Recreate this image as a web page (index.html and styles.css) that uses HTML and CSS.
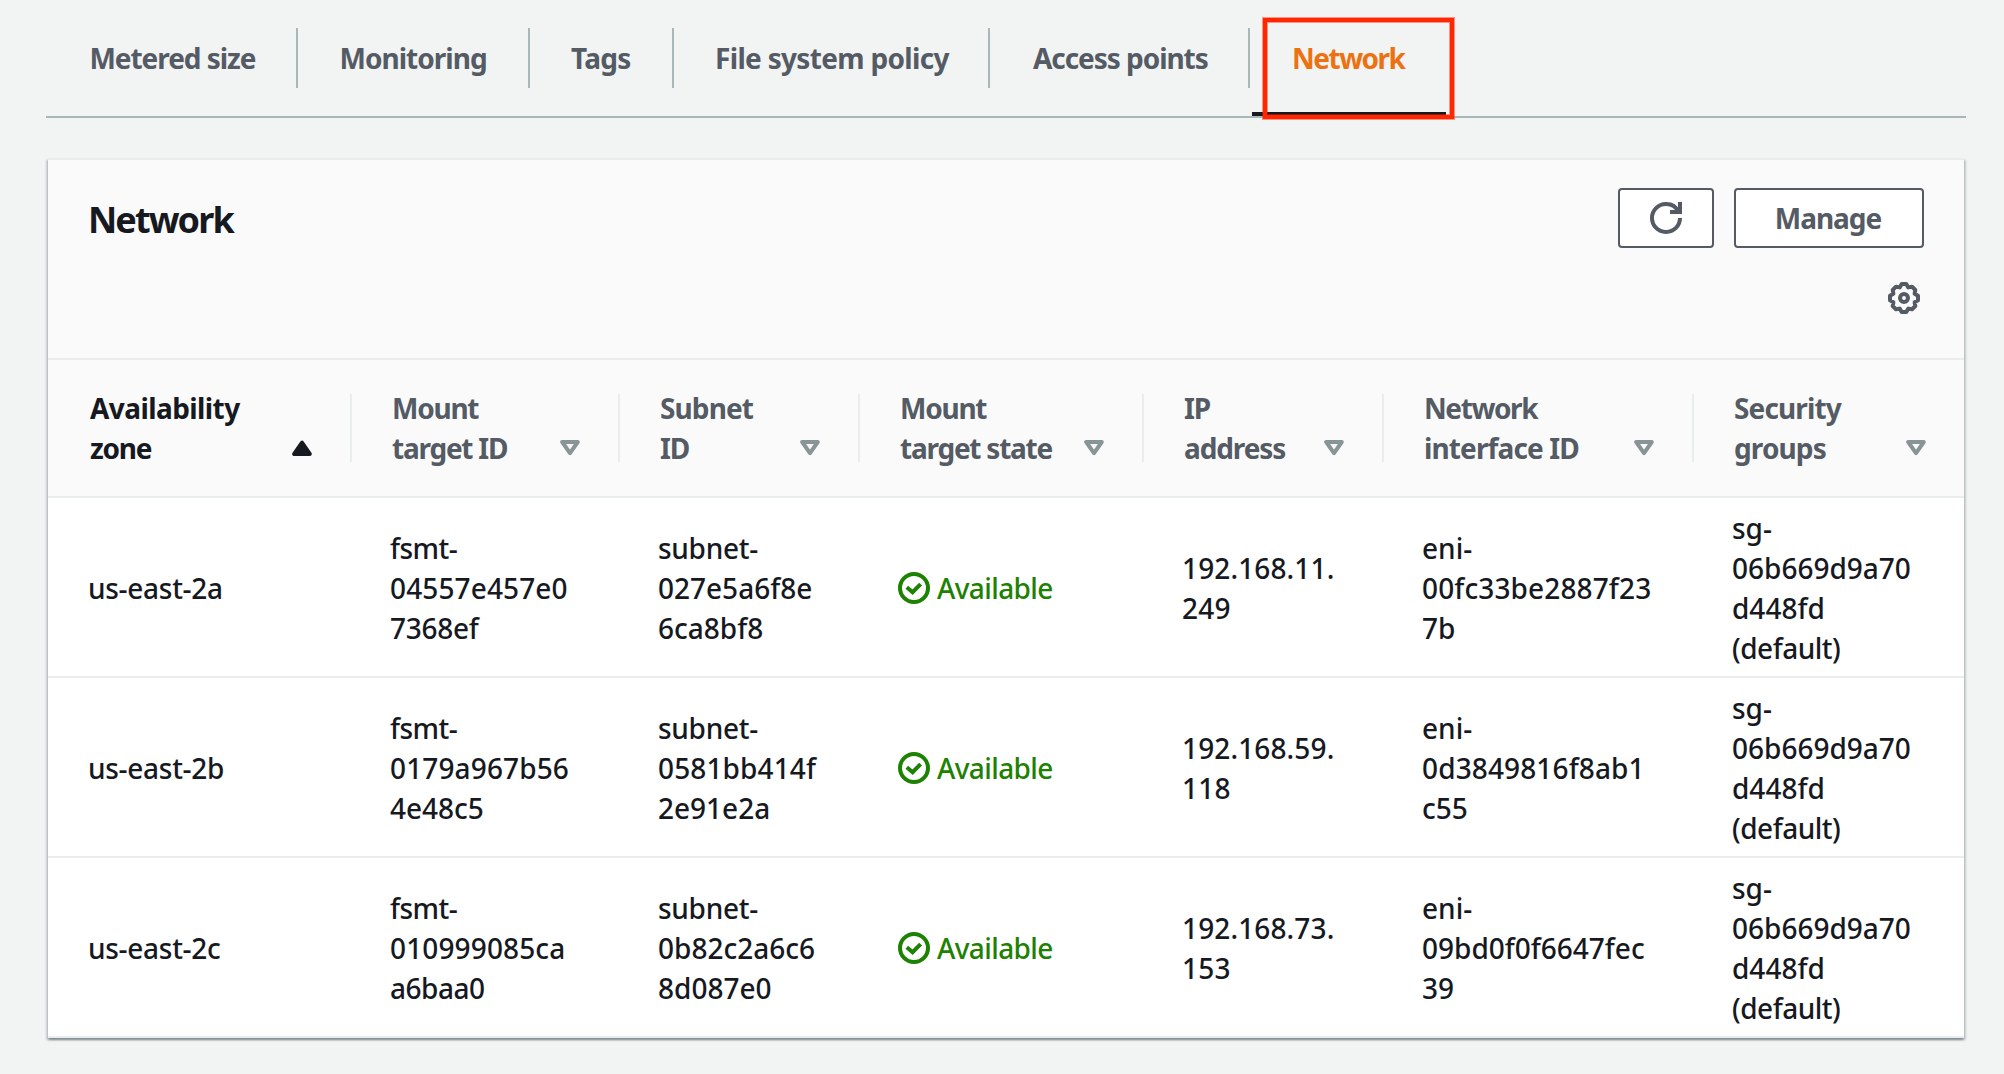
FILE: index.html
```html
<!DOCTYPE html>
<html lang="en">
<head>
<meta charset="utf-8">
<title>Network</title>
<link rel="stylesheet" href="styles.css">
</head>
<body>
<svg class="defs" aria-hidden="true">
  <symbol id="sort" viewBox="0 0 20 16"><path d="M2.2 2H17.8L10 13.2Z" fill="none" stroke="#879596" stroke-width="4" stroke-linejoin="round"/></symbol>
  <symbol id="sorted" viewBox="0 0 20 16"><path d="M2.2 14H17.8L10 2.6Z" fill="#16191f" stroke="#16191f" stroke-width="4" stroke-linejoin="round"/></symbol>
  <symbol id="ok" viewBox="0 0 32 32"><g fill="none" stroke="#1d8102" stroke-width="4"><circle cx="16" cy="16" r="14"/><path d="M8.8 15.2L14.6 20.2L22.6 12.2"/></g></symbol>
</svg>
<nav class="tabs">
  <a class="tab metered">Metered size</a>
  <a class="tab monitoring">Monitoring</a>
  <a class="tab tags">Tags</a>
  <a class="tab policy">File system policy</a>
  <a class="tab access">Access points</a>
  <a class="tab network active">Network</a>
  <span class="highlight"></span>
</nav>
<section class="card">
  <header class="card-head">
    <div class="title-row">
      <h2>Network</h2>
      <button class="btn refresh" aria-label="Refresh"><svg width="32" height="32" viewBox="0 0 16 16" fill="none" stroke="#545b64" stroke-width="2"><path d="M10 5h5V0"/><path d="M15 8a6.957 6.957 0 0 1-7 7 6.957 6.957 0 0 1-7-7 6.957 6.957 0 0 1 7-7 6.87 6.87 0 0 1 6.3 4"/></svg></button>
      <button class="btn manage">Manage</button>
    </div>
    <div class="prefs"><svg width="32" height="32" viewBox="-16 -16 32 32" fill="none" stroke="#545b64" stroke-width="4"><path stroke-linejoin="round" d="M-2.3-14H2.3L4.3-10.6L8-11.3L11.3-8L10.6-4.3L14-2.3V2.3L10.6 4.3L11.3 8L8 11.3L4.3 10.6L2.3 14H-2.3L-4.3 10.6L-8 11.3L-11.3 8L-10.6 4.3L-14 2.3V-2.3L-10.6-4.3L-11.3-8L-8-11.3L-4.3-10.6Z"/><circle r="4"/></svg></div>
  </header>
  <table>
    <colgroup><col class="c1"><col class="c2"><col class="c3"><col class="c4"><col class="c5"><col class="c6"><col class="c7"></colgroup>
    <thead>
      <tr>
        <th class="sorted"><div><span><b class="n2">Availability</b><b class="n5">zone</b></span><svg><use href="#sorted"/></svg></div></th>
        <th><div><span><b class="n5">Mount</b><b class="n5">target ID</b></span><svg><use href="#sort"/></svg></div></th>
        <th><div><span><b class="n3">Subnet</b><b class="n5">ID</b></span><svg><use href="#sort"/></svg></div></th>
        <th><div><span><b class="n5">Mount</b><b class="n5">target state</b></span><svg><use href="#sort"/></svg></div></th>
        <th><div><span><b class="n4">IP</b><b class="n4">address</b></span><svg><use href="#sort"/></svg></div></th>
        <th><div><span><b class="n6">Network</b><b class="n3">interface ID</b></span><svg><use href="#sort"/></svg></div></th>
        <th><div><span><b class="n3">Security</b><b class="n3">groups</b></span><svg><use href="#sort"/></svg></div></th>
      </tr>
    </thead>
    <tbody>
      <tr>
        <td><i class="n1">us-east-2a</i></td>
        <td><i class="n2">fsmt-</i><i class="p1">04557e457e0</i><i class="n1">7368ef</i></td>
        <td><i class="n1">subnet-</i><i>027e5a6f8e</i><i>6ca8bf8</i></td>
        <td><div class="status"><svg><use href="#ok"/></svg><i>Available</i></div></td>
        <td><i class="p1">192.168.11.</i><i class="p2">249</i></td>
        <td><i>eni-</i><i class="p1">00fc33be2887f23</i><i>7b</i></td>
        <td><i>sg-</i><i>06b669d9a70</i><i>d448fd</i><i class="n2">(default)</i></td>
      </tr>
      <tr>
        <td><i class="n1">us-east-2b</i></td>
        <td><i class="n2">fsmt-</i><i class="p1">0179a967b56</i><i>4e48c5</i></td>
        <td><i class="n1">subnet-</i><i class="p1">0581bb414f</i><i>2e91e2a</i></td>
        <td><div class="status"><svg><use href="#ok"/></svg><i>Available</i></div></td>
        <td><i class="p1">192.168.59.</i><i class="p2">118</i></td>
        <td><i>eni-</i><i class="p1">0d3849816f8ab1</i><i>c55</i></td>
        <td><i>sg-</i><i>06b669d9a70</i><i>d448fd</i><i class="n2">(default)</i></td>
      </tr>
      <tr>
        <td><i class="n1">us-east-2c</i></td>
        <td><i class="n2">fsmt-</i><i class="p1">010999085ca</i><i class="n2">a6baa0</i></td>
        <td><i class="n1">subnet-</i><i>0b82c2a6c6</i><i>8d087e0</i></td>
        <td><div class="status"><svg><use href="#ok"/></svg><i>Available</i></div></td>
        <td><i class="p1">192.168.73.</i><i class="p2">153</i></td>
        <td><i>eni-</i><i>09bd0f0f6647fec</i><i>39</i></td>
        <td><i>sg-</i><i>06b669d9a70</i><i>d448fd</i><i class="n2">(default)</i></td>
      </tr>
    </tbody>
  </table>
</section>
</body>
</html>
```
FILE: styles.css
```css
* { box-sizing: border-box; }
body {
  margin: 0;
  padding: 0 40px 0 46px;
  height: 1074px;
  overflow: hidden;
  background: #f2f3f3;
  color: #16191f;
  font: 500 28px/40px "Noto Sans", "Open Sans", sans-serif;
}
.defs { position: absolute; width: 0; height: 0; }
svg { display: block; flex: none; }

/* Tabs */
.tabs {
  position: relative;
  display: flex;
  width: 1920px;
  height: 118px;
  padding-top: 28px;
  border-bottom: 2px solid #aab7b8;
}
.tab {
  height: 60px;
  line-height: 60px;
  border-right: 2px solid #aab7b8;
  color: #545b64;
  font-weight: 700;
  white-space: nowrap;
}
.metered { width: 252px; padding-left: 43.5px; letter-spacing: -1.05px; }
.monitoring { width: 232px; padding-left: 41.5px; letter-spacing: -.97px; }
.tags { width: 144px; padding-left: 41px; letter-spacing: -.67px; }
.policy { width: 316px; padding-left: 41px; letter-spacing: -.68px; }
.access { width: 260px; padding-left: 43px; letter-spacing: -1.05px; }
.network { width: 194px; height: 88px; margin-left: 2px; padding-left: 40px; letter-spacing: -1.5px; }
.tab.active { color: #ec7211; border-right: 0; border-bottom: 4px solid #16191f; }
.highlight {
  position: absolute;
  left: 1217px;
  top: 18px;
  width: 191px;
  height: 101px;
  border: 4px solid #ff2600;
  box-shadow: 0 0 0 1px rgba(255, 38, 0, .45), inset 0 0 0 1px rgba(255, 38, 0, .45);
}

/* Card */
.card {
  width: 1916px;
  margin: 40px 0 0 2px;
  border-top: 2px solid #eaeded;
  background: #fff;
  box-shadow: 0 2px 2px rgba(0, 28, 36, .3), 2px 2px 2px rgba(0, 28, 36, .15), -2px 2px 2px rgba(0, 28, 36, .15);
}
.card-head {
  height: 200px;
  padding: 28px 40px 0 40px;
  background: #fafafa;
  border-bottom: 2px solid #eaeded;
}
.title-row { display: flex; height: 60px; gap: 20px; }
h2 { flex: 1; margin: 0; font-size: 36px; line-height: 64px; letter-spacing: -1.9px; }
.btn {
  height: 60px;
  padding: 0;
  border: 2px solid #545b64;
  border-radius: 4px;
  background: #fff;
  color: #545b64;
  font: 700 28px/56px "Noto Sans", "Open Sans", sans-serif;
  letter-spacing: -1.05px;
}
.refresh { width: 96px; display: flex; align-items: center; justify-content: center; }
.manage { width: 190px; padding-right: 2px; }
.prefs { display: flex; justify-content: flex-end; padding: 34px 4px 0 0; }

/* Table */
table { width: 1916px; table-layout: fixed; border-collapse: separate; border-spacing: 0; }
.c1 { width: 304px; }
.c2 { width: 268px; }
.c3 { width: 240px; }
.c4 { width: 284px; }
.c5 { width: 240px; }
.c6 { width: 310px; }
.c7 { width: 270px; }
th {
  height: 138px;
  padding: 0;
  background: #fafafa;
  border-bottom: 2px solid #eaeded;
  color: #545b64;
  text-align: left;
}
th.sorted { color: #16191f; }
th div {
  display: flex;
  height: 68px;
  align-items: center;
  justify-content: space-between;
  padding: 0 38px 0 40px;
  border-right: 2px solid #eaeded;
}
th:first-child div { padding-left: 42px; }
th:last-child div { border-right: 0; }
th svg { width: 20px; height: 16px; margin-top: 40px; }
b, i { display: block; font-style: normal; white-space: nowrap; }
b { font-weight: 700; }
td { height: 180px; padding: 2px 0 0 38px; border-bottom: 2px solid #eaeded; vertical-align: middle; }
td:first-child { padding-left: 40px; }
.status { display: flex; align-items: center; gap: 7px; color: #1d8102; }
.status svg { width: 32px; height: 32px; }
.status i { letter-spacing: -.62px; }

/* Tracking steps for table text */
b.n2 { letter-spacing: -.58px; }
b.n3 { letter-spacing: -.88px; }
b.n4 { letter-spacing: -1.1px; }
b.n5 { letter-spacing: -1.24px; }
b.n6 { letter-spacing: -1.4px; }
i.n1 { letter-spacing: -.28px; }
i.n2 { letter-spacing: -.5px; }
i.p1 { letter-spacing: .13px; }
i.p2 { letter-spacing: .26px; }
```
